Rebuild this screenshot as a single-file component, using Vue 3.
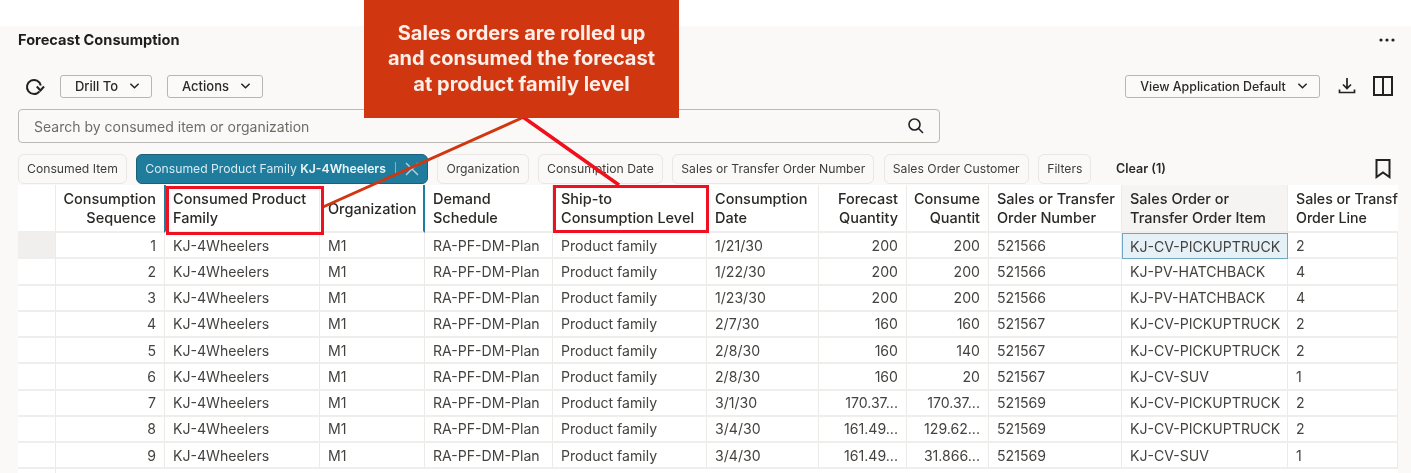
<script setup>
const cols = '38px 109px 155px 105px 128px 154px 112px 88px 82px 133px 166px 110px'

const headers = [
  { lines: [''] },
  { lines: ['Consumption', 'Sequence'], right: true },
  { lines: ['Consumed Product', 'Family'], mark: 'left' },
  { lines: ['Organization'], mark: 'right' },
  { lines: ['Demand', 'Schedule'] },
  { lines: ['Ship-to', 'Consumption Level'] },
  { lines: ['Consumption', 'Date'] },
  { lines: ['Forecast', 'Quantity'], right: true },
  { lines: ['Consume', 'Quantit'], right: true },
  { lines: ['Sales or Transfer', 'Order Number'] },
  { lines: ['Sales Order or', 'Transfer Order Item'], shade: true },
  { lines: ['Sales or Transf', 'Order Line'], last: true },
]

const rows = [
  [1, '1/21/30', '200', '200', '521566', 'KJ-CV-PICKUPTRUCK', 2],
  [2, '1/22/30', '200', '200', '521566', 'KJ-PV-HATCHBACK', 4],
  [3, '1/23/30', '200', '200', '521566', 'KJ-PV-HATCHBACK', 4],
  [4, '2/7/30', '160', '160', '521567', 'KJ-CV-PICKUPTRUCK', 2],
  [5, '2/8/30', '160', '140', '521567', 'KJ-CV-PICKUPTRUCK', 2],
  [6, '2/8/30', '160', '20', '521567', 'KJ-CV-SUV', 1],
  [7, '3/1/30', '170.37...', '170.37...', '521569', 'KJ-CV-PICKUPTRUCK', 2],
  [8, '3/4/30', '161.49...', '129.62...', '521569', 'KJ-CV-PICKUPTRUCK', 2],
  [9, '3/4/30', '161.49...', '31.866...', '521569', 'KJ-CV-SUV', 1],
]

const chips = ['Organization', 'Consumption Date', 'Sales or Transfer Order Number', 'Sales Order Customer', 'Filters']
</script>

<template>
  <div class="page">
    <div class="panel">
      <div class="title-row">
        <h1>Forecast Consumption</h1>
        <svg class="dots" width="16" height="4" viewBox="0 0 16 4" fill="#222">
          <circle cx="2" cy="2" r="1.6" /><circle cx="8" cy="2" r="1.6" /><circle cx="14" cy="2" r="1.6" />
        </svg>
      </div>

      <div class="toolbar">
        <svg class="refresh" width="22" height="22" viewBox="0 0 22 22" fill="none" stroke="#222" stroke-width="2">
          <path d="M16.8 10.5A7 7 0 1 0 15.5 16.3" />
          <path d="M12.8 11.5L16.5 15.5L20 11.5" stroke-width="2" />
        </svg>
        <button class="btn drill">Drill To <svg class="chev" viewBox="0 0 12 8"><path d="M1.5 1.5L6 6l4.5-4.5" /></svg></button>
        <button class="btn actions">Actions <svg class="chev" viewBox="0 0 12 8"><path d="M1.5 1.5L6 6l4.5-4.5" /></svg></button>
        <span class="spacer"></span>
        <button class="btn view">View Application Default <svg class="chev" viewBox="0 0 12 8"><path d="M1.5 1.5L6 6l4.5-4.5" /></svg></button>
        <svg class="download" width="18" height="18" viewBox="0 0 18 18" fill="none" stroke="#222" stroke-width="1.7">
          <path d="M9 1v10M5 7.5L9 11.5l4-4M1.5 12.5v3h15v-3" />
        </svg>
        <svg class="columns" width="20" height="20" viewBox="0 0 20 20" fill="none" stroke="#222" stroke-width="2">
          <rect x="1" y="1" width="18" height="18" />
          <path d="M10 1v18" />
        </svg>
      </div>

      <div class="search">
        <span>Search by consumed item or organization</span>
        <svg width="18" height="18" viewBox="0 0 18 18" fill="none" stroke="#222" stroke-width="1.6">
          <circle cx="7.5" cy="7.5" r="5.5" />
          <path d="M11.5 11.5L16 16" />
        </svg>
      </div>

      <div class="chips">
        <span class="chip">Consumed Item</span>
        <span class="chip active">
          Consumed Product Family&nbsp;<b>KJ-4Wheelers</b>
          <i class="sep"></i>
          <svg width="14" height="14" viewBox="0 0 14 14" fill="none" stroke="#a9d0de" stroke-width="1.5"><path d="M1 1l12 12M13 1L1 13" /></svg>
        </span>
        <span v-for="c in chips" :key="c" class="chip">{{ c }}</span>
        <span class="clear">Clear (1)</span>
        <span class="spacer"></span>
        <svg class="bookmark" width="16" height="20" viewBox="0 0 16 20" fill="none" stroke="#222" stroke-width="2">
          <path d="M1.5 1h13v17L8 13.5 1.5 18z" />
        </svg>
      </div>

      <div class="grid">
        <div class="row head" :style="{ gridTemplateColumns: cols }">
          <div
            v-for="(h, i) in headers"
            :key="i"
            class="cell"
            :class="{ right: h.right, shade: h.shade, last: h.last, 'mark-left': h.mark === 'left', 'mark-right': h.mark === 'right' }"
          >
            <div>
              <div v-for="l in h.lines" :key="l">{{ l }}</div>
            </div>
          </div>
        </div>
        <div v-for="(r, n) in rows" :key="n" class="row body" :style="{ gridTemplateColumns: cols }">
          <div class="cell" :class="{ sel: n === 0 }"></div>
          <div class="cell right">{{ r[0] }}</div>
          <div class="cell">KJ-4Wheelers</div>
          <div class="cell">M1</div>
          <div class="cell">RA-PF-DM-Plan</div>
          <div class="cell">Product family</div>
          <div class="cell">{{ r[1] }}</div>
          <div class="cell right">{{ r[2] }}</div>
          <div class="cell right">{{ r[3] }}</div>
          <div class="cell">{{ r[4] }}</div>
          <div class="cell" :class="{ current: n === 0 }">{{ r[5] }}</div>
          <div class="cell">{{ r[6] }}</div>
        </div>
        <div class="row tail" :style="{ gridTemplateColumns: cols }">
          <div class="cell"></div>
        </div>
      </div>
    </div>

    <!-- annotations drawn over the screenshot -->
    <svg class="lines" width="1411" height="473" viewBox="0 0 1411 473" fill="none">
      <path d="M524 117L323 207" stroke="#d0360f" stroke-width="3" />
      <path d="M523 117L619 185" stroke="#f0101c" stroke-width="3.5" />
    </svg>
    <div class="callout">Sales orders are rolled up<br />and consumed the forecast<br />at product family level</div>
    <div class="box box-a"></div>
    <div class="box box-b"></div>
  </div>
</template>

<style scoped>
.page {
  position: relative;
  width: 1411px;
  height: 473px;
  overflow: hidden;
  background: #fff;
  padding-top: 26px;
  box-sizing: border-box;
  font-family: Inter, "Noto Sans", sans-serif;
  color: #2b2926;
  filter: blur(0.3px);
}

.panel {
  height: 447px;
  background: #faf9f8;
  padding: 0 13px 0 18px;
  box-sizing: border-box;
}

.title-row {
  display: flex;
  justify-content: space-between;
  align-items: center;
  height: 27px;
}

h1 {
  margin: 0;
  font-size: 14.6px;
  font-weight: 700;
  color: #201e1c;
}

.dots {
  margin-right: 3px;
}

.toolbar {
  display: flex;
  align-items: center;
  height: 24px;
  margin-top: 21px;
}

.refresh {
  margin-left: 6px;
  margin-right: 14px;
}

.spacer {
  flex: 1;
}

.btn {
  display: flex;
  align-items: center;
  justify-content: center;
  gap: 11px;
  height: 23px;
  box-sizing: border-box;
  border: 1px solid #b9b6b2;
  border-radius: 3px;
  background: #fbfaf9;
  font: 500 13px Inter, "Noto Sans", sans-serif;
  color: #2b2926;
  padding: 0 0 0 3px;
}

.drill {
  width: 92px;
  margin-right: 15px;
}

.actions {
  width: 96px;
}

.view {
  width: 195px;
  font-size: 12.4px;
}

.chev {
  width: 11px;
  height: 8px;
  fill: none;
  stroke: #222;
  stroke-width: 1.6;
}

.download {
  margin-left: 18px;
}

.columns {
  margin-left: 17px;
  margin-right: 5px;
}

.search {
  display: flex;
  align-items: center;
  justify-content: space-between;
  width: 922px;
  height: 34px;
  margin-top: 11px;
  padding: 0 14px 0 15px;
  box-sizing: border-box;
  border: 1px solid #bdbab6;
  border-radius: 4px;
  font-size: 14px;
  color: #6f6c68;
}

.chips {
  display: flex;
  align-items: center;
  gap: 9.5px;
  height: 31px;
  margin-top: 10px;
}

.chip {
  display: flex;
  align-items: center;
  height: 30px;
  padding: 0 8px;
  box-sizing: border-box;
  border: 1px solid #e9e7e4;
  border-radius: 6px;
  font-size: 12.2px;
  color: #3f3c39;
  white-space: nowrap;
}

.chip.active {
  background: #1f7c9c;
  border-color: #1b5f78;
  color: #d6ebf3;
}

.chip b {
  font-weight: 600;
  color: #eaf5f9;
}

.sep {
  width: 1px;
  height: 14px;
  background: #7fb4c8;
  margin: 0 9px 0 9px;
}

.clear {
  margin-left: 15px;
  font-size: 12.5px;
  font-weight: 600;
  color: #2b2926;
}

.bookmark {
  margin-right: 7px;
}

.grid {
  width: 1380px;
  margin-top: 1px;
  background: #fff;
  overflow: hidden;
}

.row {
  display: grid;
}

.head {
  height: 48px;
  font-size: 14.5px;
  font-weight: 500;
  color: #2b2926;
}

.body {
  height: 26.25px;
  font-size: 14.1px;
  color: #454340;
}

.tail {
  height: 5px;
}

.tail .cell {
  border-bottom: 0;
}

.cell {
  display: flex;
  box-sizing: border-box;
  padding: 0 8px;
  border-right: 1px solid #ecebe8;
  border-bottom: 2px solid #f0eeec;
  white-space: nowrap;
  overflow: hidden;
  align-items: center;
}

.cell.right {
  justify-content: flex-end;
  text-align: right;
}

.head .cell {
  line-height: 19px;
}

.head .cell.shade {
  background: #f5f4f2;
}

.head .cell.last {
  padding-right: 0;
  font-size: 14.2px;
  border-right: 0;
}

.mark-left {
  border-left: 2px solid #1f7c9c;
  margin-left: -1px;
  padding-left: 7px;
}

.mark-right {
  border-right: 2px solid #1f7c9c;
}

.sel {
  background: #f1efed;
}

.current {
  background: #e5f1f7;
  border: 1px solid #6fa8c0;
  padding-left: 7px;
}

.lines {
  position: absolute;
  left: 0;
  top: 0;
  pointer-events: none;
}

.callout {
  position: absolute;
  left: 364px;
  top: 0;
  width: 315px;
  height: 118px;
  display: flex;
  align-items: center;
  justify-content: center;
  text-align: center;
  background: #d0360f;
  color: #fdeee8;
  font-size: 20px;
  font-weight: 700;
  line-height: 25.5px;
}

.box {
  position: absolute;
  box-sizing: border-box;
  border: 3.5px solid #ee1122;
}

.box-a {
  left: 166px;
  top: 186px;
  width: 158px;
  height: 49px;
}

.box-b {
  left: 553px;
  top: 185px;
  width: 156px;
  height: 48px;
}
</style>
